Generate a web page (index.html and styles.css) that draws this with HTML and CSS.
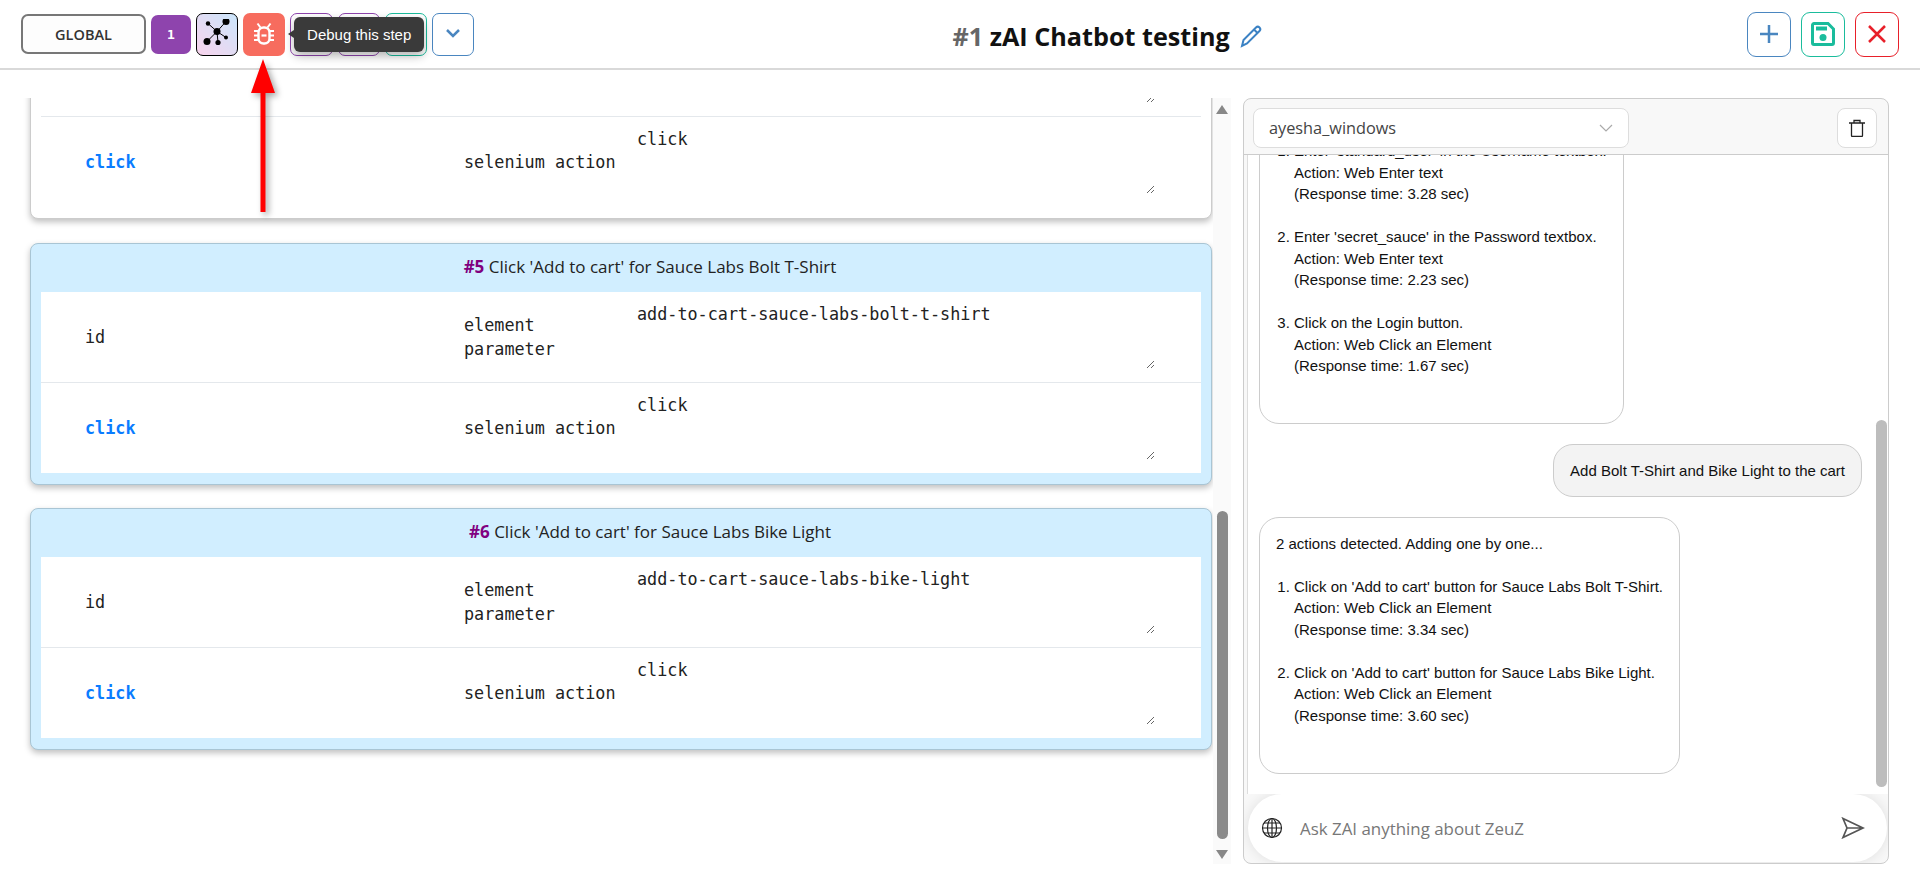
FILE: index.html
```html
<!DOCTYPE html>
<html lang="en">
<head>
    <meta charset="UTF-8">
    <meta name="viewport" content="width=device-width, initial-scale=1.0">
    <title>zAI Chatbot testing</title>
    <link rel="stylesheet" href="styles.css">
</head>
<body>
    <header class="topbar">
        <div class="tools">
            <button class="global-btn">GLOBAL</button>
            <button class="step-count">1</button>
            <button class="tool graph-btn">
                <svg width="30" height="30" viewBox="0 0 30 30">
                    <path d="M15 12.500 24 2.500M15 12.500 6 4.500M15 12.500 5 22.500M15 12.500l1 11M15 12.500l9 6" stroke="#000" stroke-width="1" fill="none"/>
                    <circle cx="15" cy="12.500" r="3.500"/>
                    <circle cx="24" cy="2.500" r="3.500"/>
                    <circle cx="6" cy="4.500" r="2.200"/>
                    <circle cx="5" cy="22.500" r="3.500"/>
                    <circle cx="16" cy="23.500" r="2.600"/>
                    <circle cx="24" cy="18.500" r="2"/>
                </svg>
            </button>
            <div class="debug-wrap">
                <button class="tool debug-btn">
                    <svg width="26" height="26" viewBox="0 0 26 26" fill="none" stroke="#fff" stroke-width="2.400">
                        <rect x="7.500" y="6.500" width="11" height="16" rx="5"/>
                        <path d="M10.500 14.500h5" stroke-width="2.200"/>
                        <path d="M9.500 6.500 6.500 2.500M16.500 6.500l3-4M7 10H3M19 10h4M7 14.500H3M19 14.500h4M7 19H3M19 19h4" stroke-width="2"/>
                    </svg>
                </button>
                <div class="tooltip">Debug this step</div>
            </div>
            <button class="tool outline-purple"></button>
            <button class="tool outline-purple"></button>
            <button class="tool outline-teal"></button>
            <button class="tool outline-blue">
                <svg width="18" height="12" viewBox="0 0 18 12" fill="none" stroke="#4a86c0" stroke-width="2.500"><path d="M3 2l6 6 6-6"/></svg>
            </button>
        </div>
        <h1 class="title">
            <span><span class="title-num">#1</span> zAI Chatbot testing</span>
            <svg class="pencil" width="24" height="24" viewBox="0 0 24 24" fill="none" stroke="#3b82c4" stroke-width="2"><path d="M3 22l1.500-6L17 3.500a2.500 2.500 0 0 1 3.500 0 2.500 2.500 0 0 1 0 3.500L8 19.500zM15 5.500 18.500 9"/></svg>
        </h1>
        <div class="actions">
            <button class="tool big outline-blue">
                <svg width="20" height="20" viewBox="0 0 20 20" stroke="#4a86c0" stroke-width="2.500"><path d="M10 1v18M1 10h18"/></svg>
            </button>
            <button class="tool big outline-teal">
                <svg width="24" height="24" viewBox="0 0 24 24" fill="none" stroke="#1abc9c" stroke-width="3"><path d="M3 1.500h14l5.500 5.500v14a1.500 1.500 0 0 1-1.500 1.500H3A1.500 1.500 0 0 1 1.500 21V3A1.500 1.500 0 0 1 3 1.500z"/><path d="M5 6.500h11" stroke-width="4"/><circle cx="12" cy="15.500" r="3.500" fill="#1abc9c" stroke="none"/></svg>
            </button>
            <button class="tool big outline-red">
                <svg width="20" height="20" viewBox="0 0 20 20" stroke="#e8202a" stroke-width="2.500"><path d="M2 2l16 16M18 2 2 18"/></svg>
            </button>
        </div>
    </header>

    <main class="workspace">
        <div class="steps">
            <section class="step-card plain first">
                <div class="row">
                    <div class="cell-key"></div>
                    <div class="cell-type"></div>
                    <textarea class="cell-value" readonly></textarea>
                </div>
                <div class="row">
                    <div class="cell-key action">click</div>
                    <div class="cell-type">selenium action</div>
                    <textarea class="cell-value" readonly>click</textarea>
                </div>
            </section>

            <section class="step-card">
                <div class="step-title"><b>#5</b> Click 'Add to cart' for Sauce Labs Bolt T-Shirt</div>
                <div class="row">
                    <div class="cell-key">id</div>
                    <div class="cell-type">element parameter</div>
                    <textarea class="cell-value" readonly>add-to-cart-sauce-labs-bolt-t-shirt</textarea>
                </div>
                <div class="row">
                    <div class="cell-key action">click</div>
                    <div class="cell-type">selenium action</div>
                    <textarea class="cell-value" readonly>click</textarea>
                </div>
            </section>

            <section class="step-card">
                <div class="step-title"><b>#6</b> Click 'Add to cart' for Sauce Labs Bike Light</div>
                <div class="row">
                    <div class="cell-key">id</div>
                    <div class="cell-type">element parameter</div>
                    <textarea class="cell-value" readonly>add-to-cart-sauce-labs-bike-light</textarea>
                </div>
                <div class="row">
                    <div class="cell-key action">click</div>
                    <div class="cell-type">selenium action</div>
                    <textarea class="cell-value" readonly>click</textarea>
                </div>
            </section>
        </div>

        <div class="steps-scroll">
            <span class="arrow-up"></span>
            <span class="thumb"></span>
            <span class="arrow-down"></span>
        </div>

        <aside class="chat">
            <div class="chat-head">
                <div class="node-select">
                    ayesha_windows
                    <svg width="14" height="8" viewBox="0 0 14 8" fill="none" stroke="#aaa" stroke-width="1.200"><path d="M1 1l6 6 6-6"/></svg>
                </div>
                <button class="trash-btn">
                    <svg width="16" height="18" viewBox="0 0 16 18" fill="none" stroke="#222" stroke-width="1.300"><path d="M0 4h16M2.500 4v12.500a1 1 0 0 0 1 1h9a1 1 0 0 0 1-1V4M5 4V1.500h6V4"/></svg>
                </button>
            </div>
            <div class="messages">
                <div class="bubble first-bubble">
                    <ol>
                        <li>Enter 'standard_user' in the Username textbox.<br>Action: Web Enter text<br>(Response time: 3.28 sec)</li>
                        <li>Enter 'secret_sauce' in the Password textbox.<br>Action: Web Enter text<br>(Response time: 2.23 sec)</li>
                        <li>Click on the Login button.<br>Action: Web Click an Element<br>(Response time: 1.67 sec)</li>
                    </ol>
                </div>
                <div class="bubble user">Add Bolt T-Shirt and Bike Light to the cart</div>
                <div class="bubble">
                    <p>2 actions detected. Adding one by one...</p>
                    <ol>
                        <li>Click on 'Add to cart' button for Sauce Labs Bolt T-Shirt.<br>Action: Web Click an Element<br>(Response time: 3.34 sec)</li>
                        <li>Click on 'Add to cart' button for Sauce Labs Bike Light.<br>Action: Web Click an Element<br>(Response time: 3.60 sec)</li>
                    </ol>
                </div>
                <span class="chat-thumb"></span>
            </div>
            <div class="composer">
                <svg width="22" height="22" viewBox="0 0 22 22" fill="none" stroke="#222" stroke-width="1.200"><circle cx="11" cy="11" r="9.500"/><ellipse cx="11" cy="11" rx="4.500" ry="9.500"/><path d="M1.500 11h19M3 6h16M3 16h16M11 1.500v19"/></svg>
                <span class="placeholder">Ask ZAI anything about ZeuZ</span>
                <svg class="send" width="24" height="22" viewBox="0 0 24 22" fill="none" stroke="#555" stroke-width="1.700"><path d="M2 1.500 22 11 2 20.500 6 11zM6 11h16"/></svg>
            </div>
        </aside>
    </main>

    <svg class="red-arrow" width="40" height="170" viewBox="0 0 40 170">
        <path d="M18 4 6 38H15.500V157h5V38H30z" fill="#f00"/>
    </svg>
</body>
</html>
```

FILE: styles.css
```css
* {
    box-sizing: border-box;
}
body {
    margin: 0;
    height: 881px;
    overflow: hidden;
    background: #fff;
    font-family: "Open Sans", sans-serif;
    color: #222;
}
button {
    padding: 0;
    cursor: pointer;
    background: #fff;
    font-family: inherit;
}

/* top bar */
.topbar {
    height: 70px;
    display: flex;
    align-items: center;
    padding: 0 21px;
    border-bottom: 2px solid #d9d9d9;
}
.tools {
    display: flex;
    align-items: center;
    gap: 5px;
    flex-shrink: 0;
}
.global-btn {
    width: 125px;
    height: 40px;
    border: 2px solid #777;
    border-radius: 7px;
    background: #fdfdfd;
    font-size: 14.500px;
    font-weight: 600;
    color: #333;
}
.step-count {
    width: 40px;
    height: 39px;
    border: none;
    border-radius: 7px;
    background: #8e44ad;
    color: #fff;
    font-family: "DejaVu Sans Mono", monospace;
    font-weight: bold;
    font-size: 13px;
}
.tool {
    width: 42.200px;
    height: 43px;
    display: flex;
    align-items: center;
    justify-content: center;
    border: 1px solid #999;
    border-radius: 7px;
}
.tool.big {
    width: 44px;
    height: 45px;
    border-radius: 9px;
}
.graph-btn {
    border-color: #000;
    background: linear-gradient(45deg, #f8d3ec, #cbe6fc);
}
.debug-wrap {
    position: relative;
}
.debug-btn {
    border: none;
    background: #f76c5e;
}
.outline-purple {
    border-color: #8e44ad;
}
.outline-teal {
    border-color: #1abc9c;
}
.outline-blue {
    border-color: #4a86c0;
}
.outline-red {
    border-color: #e8202a;
}
.tooltip {
    position: absolute;
    left: 51px;
    top: 4px;
    width: 130px;
    height: 35px;
    display: flex;
    align-items: center;
    justify-content: center;
    background: #3a3a3a;
    border-radius: 6px;
    color: #fff;
    font-family: "Liberation Sans", sans-serif;
    font-size: 15px;
    box-shadow: 0 4px 10px rgba(0, 0, 0, 0.3);
}
.tooltip::before {
    content: "";
    position: absolute;
    left: -6px;
    top: 13px;
    border-style: solid;
    border-width: 4px 6px 4px 0;
    border-color: transparent #3a3a3a transparent transparent;
}
.title {
    flex: 1;
    margin: 0;
    padding: 3px 6px 0 0;
    display: flex;
    align-items: center;
    justify-content: center;
    gap: 9px;
    font-size: 25.200px;
    font-weight: 700;
    color: #111;
}
.title-num {
    color: #666;
}
.actions {
    display: flex;
    gap: 10px;
}

/* main area */
.workspace {
    height: 794px;
    display: flex;
    margin-top: 28px;
}
.steps {
    width: 1213px;
    height: 766px;
    padding: 0 1px 0 30px;
    overflow: hidden;
}
.step-card {
    margin-bottom: 23px;
    padding: 0 10px 11px;
    background: #d1eeff;
    border: 1px solid #a9c5d4;
    border-radius: 8px;
    box-shadow: 0 3px 6px rgba(0, 0, 0, 0.25);
}
.step-card.plain {
    background: #fff;
    border-color: #ccc;
}
.step-card.first {
    margin-top: -73px;
    margin-bottom: 24px;
}
.step-title {
    height: 48px;
    padding-left: 58px;
    line-height: 46px;
    text-align: center;
    font-size: 17px;
    color: #222;
}
.step-title b {
    color: #800080;
}
.row {
    height: 90px;
    display: grid;
    grid-template-columns: 423px 173px 519px;
    align-items: center;
    background: #fff;
    font-family: "DejaVu Sans Mono", monospace;
    font-size: 16.800px;
    line-height: 24px;
}
.row + .row {
    height: 91px;
    border-top: 1px solid #e4e8ec;
}
.cell-key {
    padding-left: 44px;
}
.cell-key.action {
    color: #0a7cff;
    font-weight: bold;
}
.cell-type {
    padding-right: 8px;
}
.cell-value {
    align-self: start;
    width: 518px;
    height: 70px;
    margin-top: 7px;
    padding: 3px 0;
    border: none;
    outline: none;
    font: inherit;
    color: inherit;
    line-height: 24px;
}

/* fake scrollbar of the steps list */
.steps-scroll {
    width: 18px;
    height: 766px;
    display: flex;
    flex-direction: column;
    align-items: center;
    background: #fafafa;
    padding: 7px 0 5px;
}
.arrow-up {
    border-style: solid;
    border-width: 0 6px 9px;
    border-color: transparent transparent #888;
}
.arrow-down {
    border-style: solid;
    border-width: 9px 6px 0;
    border-color: #888 transparent transparent;
}
.thumb {
    width: 11px;
    height: 328px;
    margin-top: auto;
    margin-bottom: 11px;
    background: #8a8a8a;
    border-radius: 6px;
}

/* chat panel */
.chat {
    width: 646px;
    height: 766px;
    margin-left: 12px;
    display: flex;
    flex-direction: column;
    background: #f8f8f8;
    border: 1px solid #ccc;
    border-radius: 8px;
    overflow: hidden;
}
.chat-head {
    height: 56px;
    flex-shrink: 0;
    display: flex;
    align-items: center;
    justify-content: space-between;
    padding: 2px 11px 0 9px;
    border-bottom: 1px solid #ccc;
}
.node-select {
    width: 376px;
    height: 40px;
    display: flex;
    align-items: center;
    justify-content: space-between;
    padding: 0 15px;
    background: #fff;
    border: 1px solid #ddd;
    border-radius: 8px;
    font-size: 16.300px;
    color: #444;
}
.trash-btn {
    width: 40px;
    height: 40px;
    display: flex;
    align-items: center;
    justify-content: center;
    border: 1px solid #ddd;
    border-radius: 8px;
}
.messages {
    position: relative;
    height: 639px;
    flex-shrink: 0;
    display: flex;
    flex-direction: column;
    align-items: flex-start;
    gap: 19.500px;
    margin-left: 3px;
    padding: 0 26px 0 11px;
    background: #fff;
    border-left: 1px solid #ddd;
    overflow: hidden;
    font-family: "Liberation Sans", sans-serif;
    font-size: 15px;
    line-height: 21.500px;
    color: #111;
}
.bubble {
    flex-shrink: 0;
    padding: 15px 16px 25px;
    border: 1px solid #ccc;
    border-radius: 20px;
    background: #fff;
}
.first-bubble {
    margin-top: -31px;
}
.bubble.user {
    align-self: flex-end;
    padding: 15px 16px;
    background: #f3f3f3;
}
.bubble p {
    margin: 0 0 21.500px;
}
.bubble ol {
    margin: 0;
    padding-left: 18px;
}
.bubble li {
    margin-bottom: 21.500px;
}
.chat-thumb {
    position: absolute;
    right: 1px;
    top: 265px;
    width: 11px;
    height: 367px;
    background: #bdbdbd;
    border-radius: 6px;
}
.composer {
    flex: 1;
    display: flex;
    align-items: center;
    gap: 17px;
    margin: 0 1px 1px 4px;
    padding: 0 22px 0 13px;
    background: #fff;
    border-radius: 34px;
    box-shadow: 0 0 14px rgba(0, 0, 0, 0.1);
}
.placeholder {
    flex: 1;
    font-size: 16.900px;
    color: #777;
}

.red-arrow {
    position: absolute;
    left: 245px;
    top: 55px;
    filter: drop-shadow(3px 3px 3px rgba(0, 0, 0, 0.35));
}
```
